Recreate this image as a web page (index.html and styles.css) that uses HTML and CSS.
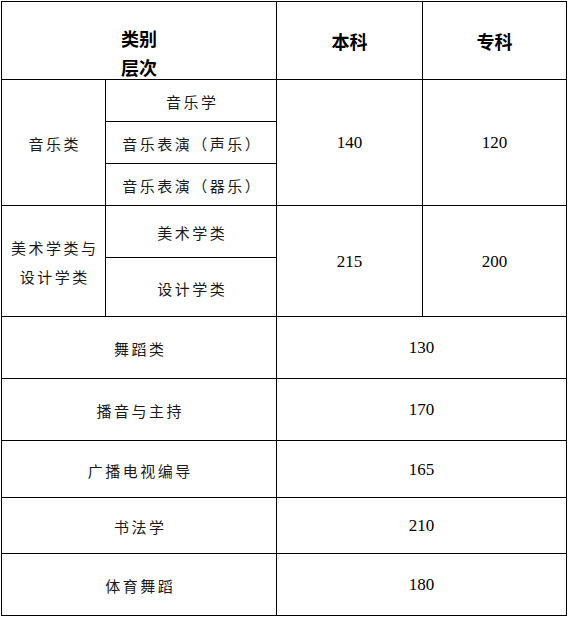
FILE: index.html
```html
<!DOCTYPE html>
<html lang="zh-CN">
<head>
<meta charset="utf-8">
<title>分数线</title>
<link rel="stylesheet" href="styles.css">
</head>
<body>
<div class="sheet">
  <div class="cell head-cat span-2"><span>类别</span><span>层次</span></div>
  <div class="cell head">本科</div>
  <div class="cell head">专科</div>

  <div class="cell zh rows-3">音乐类</div>
  <div class="cell zh">音乐学</div>
  <div class="cell num c3 rows-3">140</div>
  <div class="cell num c4 rows-3">120</div>
  <div class="cell zh">音乐表演（声乐）</div>
  <div class="cell zh">音乐表演（器乐）</div>

  <div class="cell zh multi rows-2"><span>美术学类与</span><span>设计学类</span></div>
  <div class="cell zh">美术学类</div>
  <div class="cell num c3 rows-2">215</div>
  <div class="cell num c4 rows-2">200</div>
  <div class="cell zh">设计学类</div>

  <div class="cell zh span-2">舞蹈类</div>
  <div class="cell num span-2">130</div>
  <div class="cell zh span-2">播音与主持</div>
  <div class="cell num span-2">170</div>
  <div class="cell zh span-2">广播电视编导</div>
  <div class="cell num span-2">165</div>
  <div class="cell zh span-2">书法学</div>
  <div class="cell num span-2">210</div>
  <div class="cell zh span-2">体育舞蹈</div>
  <div class="cell num span-2">180</div>
</div>
</body>
</html>
```
FILE: styles.css
```css
html, body {
  margin: 0;
  padding: 0;
  background: #ffffff;
}

.sheet {
  margin: 1px 0 0 1px;
  width: 566px;
  box-sizing: border-box;
  border-top: 1px solid #000;
  border-left: 1px solid #000;
  display: grid;
  grid-template-columns: 104px 171px 146px 144px;
  grid-template-rows: 78px 42px 42px 42px 52px 59px 62px 62px 57px 56px 62px;
  grid-auto-flow: row dense;
}

.cell {
  box-sizing: border-box;
  border-right: 1px solid #000;
  border-bottom: 1px solid #000;
  display: flex;
  align-items: center;
  justify-content: center;
  color: #000;
}

.span-2 { grid-column: span 2; }
.rows-3 { grid-row: span 3; }
.rows-2 { grid-row: span 2; }
.c3 { grid-column: 3; }
.c4 { grid-column: 4; }

.head,
.head-cat {
  font-family: "Noto Sans CJK SC", "Noto Sans", sans-serif;
  font-weight: 700;
  font-size: 18px;
}

.head-cat {
  flex-direction: column;
  justify-content: flex-start;
  padding-top: 22px;
  line-height: 29px;
  overflow: visible;
}

.zh {
  font-family: "Noto Sans CJK SC", "Noto Sans", sans-serif;
  font-weight: 400;
  font-size: 15px;
  letter-spacing: 2.5px;
  padding-left: 2.5px;
  padding-top: 2px;
  color: #1a1a1a;
}

.multi {
  flex-direction: column;
  line-height: 29px;
}

.num {
  font-family: "Liberation Serif", "Times New Roman", serif;
  font-size: 17px;
  padding-top: 1px;
}
```
